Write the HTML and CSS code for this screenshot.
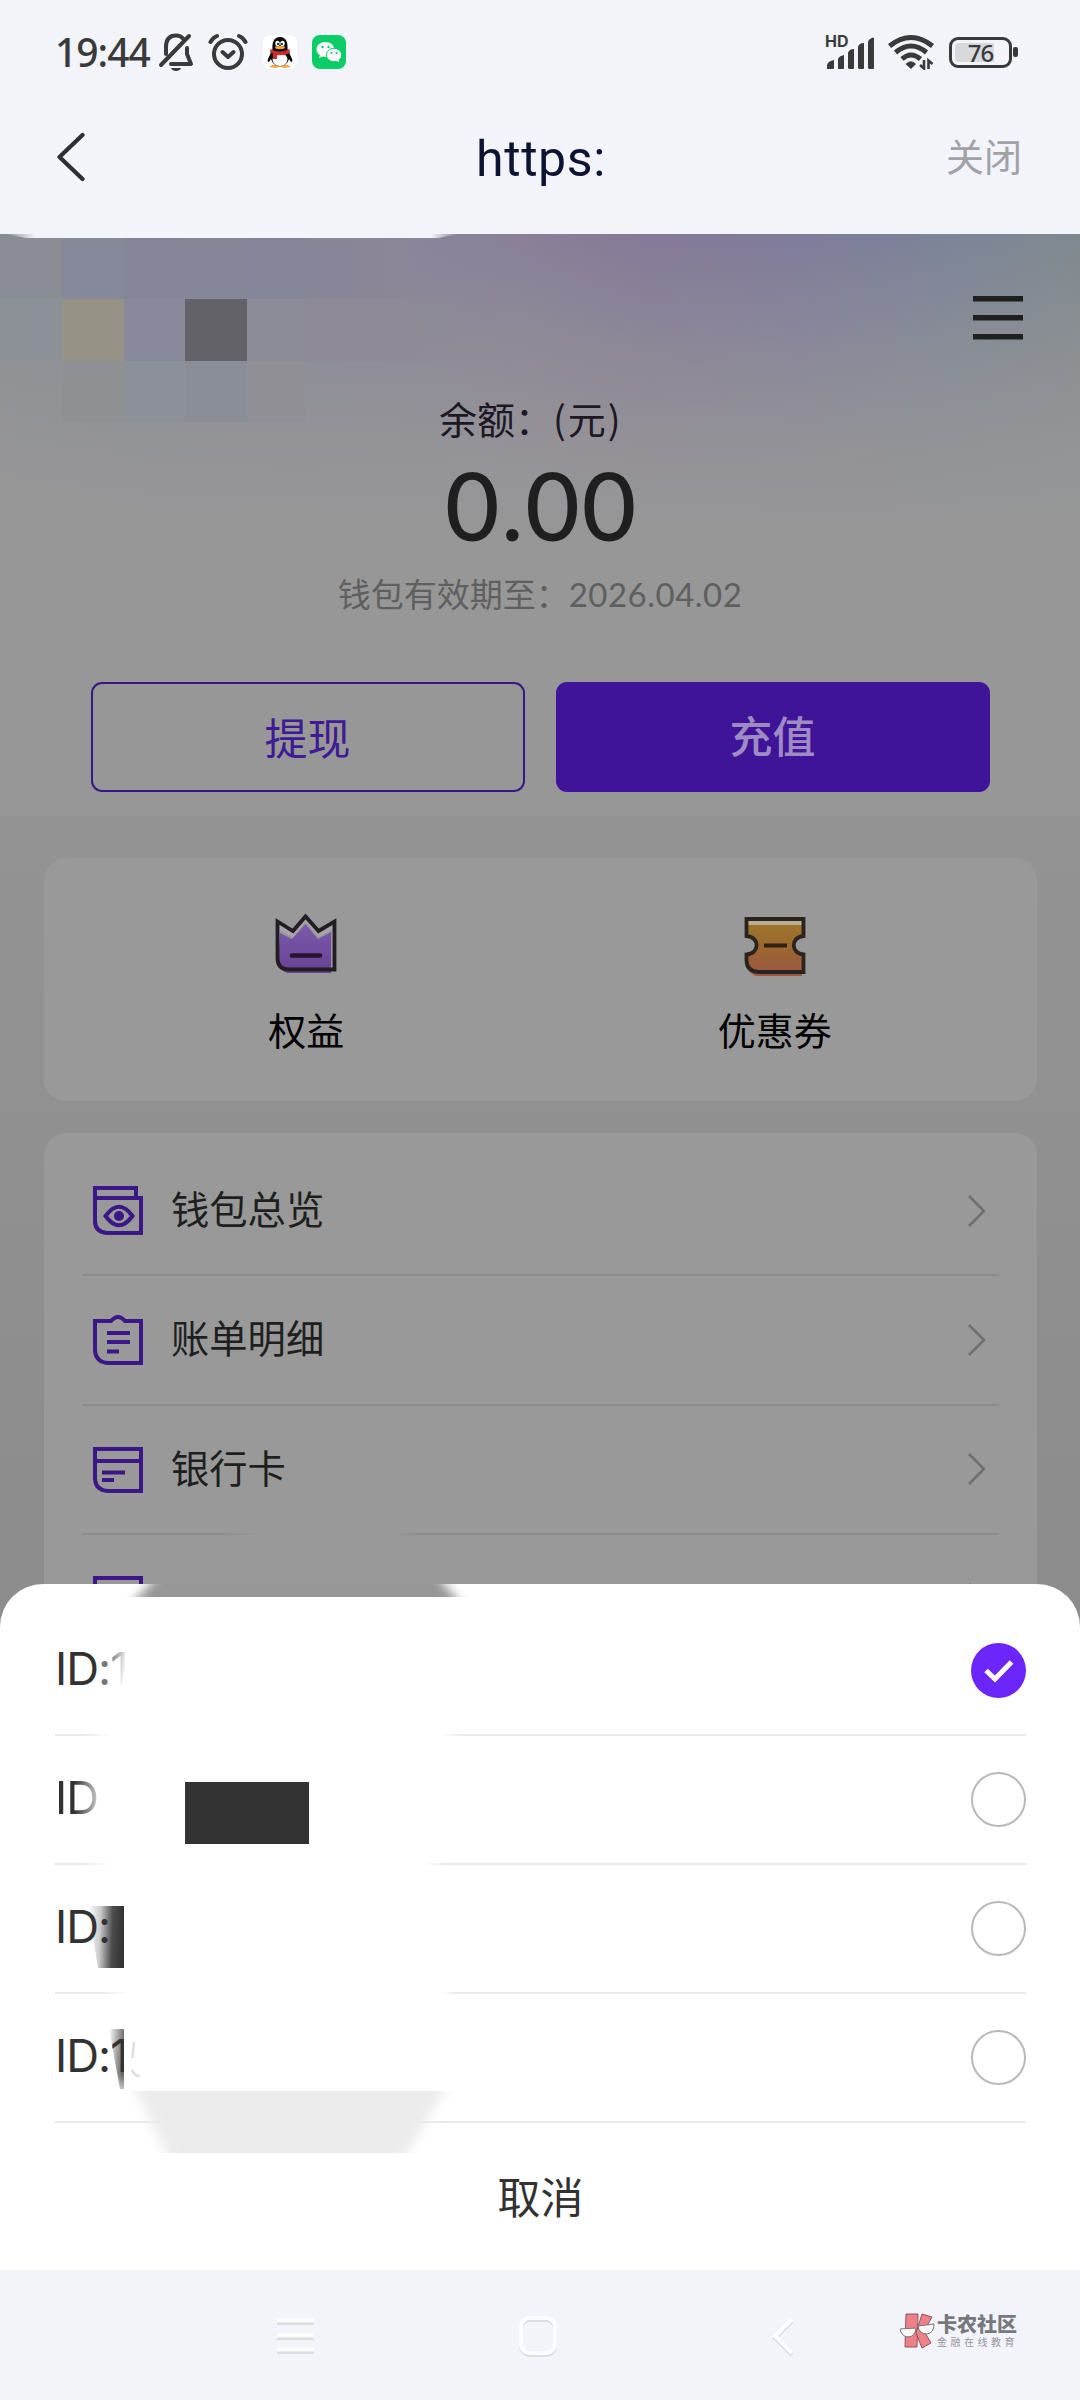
FILE: index.html
```html
<!DOCTYPE html>
<html lang="zh-CN">
<head>
<meta charset="utf-8">
<title>钱包</title>
<link rel="stylesheet" href="styles.css">
</head>
<body>
<div class="status">
  <span class="clock">19:44</span>
  <svg class="st-bell" viewBox="0 0 36 40" width="36" height="40" fill="none" stroke="#3a3a3c" stroke-width="4" stroke-linecap="round" stroke-linejoin="round">
    <path d="M8 22V15C8 7 12 3.500 18 3.500C21 3.500 23.500 4.500 25 6.500M29 16V22L33 32H13M3 33L31 4"/><path d="M13 36H23C22 40 14 40 13 36Z" fill="#3a3a3c" stroke="none"/>
  </svg>
  <svg class="st-alarm" viewBox="0 0 40 38" width="40" height="38" fill="none" stroke="#3a3a3c" stroke-width="4" stroke-linecap="round" stroke-linejoin="round">
    <circle cx="20" cy="21" r="14"/><path d="M14.500 19L20 24L25.500 19M2.500 9Q5 4.500 9 3M37.500 9Q35 4.500 31 3"/>
  </svg>
  <svg class="st-qq" viewBox="0 0 34 34" width="34" height="34">
    <rect width="34" height="34" rx="8" fill="#fff"/>
    <path d="M6 32Q11 28 17 31Q23 28 28 32Q22 33.500 17 32Q12 33.500 6 32Z" fill="#f0a43c"/>
    <path d="M17 2C11 2 9 7 9.500 14L5 24Q4 27 6 27L8 24Q10 31 17 31Q24 31 26 24L28 27Q30 27 29 24L24.500 14C25 7 23 2 17 2Z" fill="#080808"/>
    <ellipse cx="17" cy="24.500" rx="7.500" ry="6.500" fill="#fff"/>
    <ellipse cx="14.500" cy="8.500" rx="2.200" ry="2.800" fill="#fff"/><ellipse cx="19.500" cy="8.500" rx="2.200" ry="2.800" fill="#fff"/>
    <circle cx="15" cy="9" r="1"/><circle cx="19" cy="9" r="1"/>
    <ellipse cx="17" cy="12.500" rx="5" ry="1.700" fill="#f0a43c"/>
    <path d="M7.500 14Q17 19 26.500 14L27 18Q21 21 14 20V24H10V18.500L7 17.500Z" fill="#cf2b2b"/>
  </svg>
  <svg class="st-wx" viewBox="0 0 34 34" width="34" height="34">
    <rect width="34" height="34" rx="8" fill="#0acd67"/>
    <path d="M13.500 7C8 7 4.500 10.500 4.500 14.500C4.500 17 6 19 8 20.300L7 23L10.500 21.500Q13 22.300 15 21.500Q22 21 22.500 14.500C22 10 18.500 7 13.500 7Z" fill="#fff"/>
    <ellipse cx="22" cy="20" rx="7.600" ry="6.800" fill="#fff" stroke="#0acd67"/>
    <path d="M24 25L27 27.500L26.500 23Z" fill="#fff"/>
    <g fill="#0acd67"><circle cx="10.500" cy="12" r="1.200"/><circle cx="16.500" cy="12" r="1.200"/><circle cx="19.500" cy="18" r="1"/><circle cx="24.500" cy="18" r="1"/></g>
  </svg>
  <div class="signal">
    <span class="hd">HD</span>
    <svg viewBox="0 0 48 32" width="48" height="32" fill="#3a3a3c"><path d="M0 32V28Q1 24 7 23V31Q7 32 6 32ZM11 32V22Q12 19 17 18V31Q17 32 16 32ZM21 31V16Q22 12 27 12V31Q27 32 26 32H22ZM31 31V10Q32 6 37 6V31Q37 32 36 32H32ZM41 31V5Q42 1 47 0.500V31Q47 32 46 32H42Z"/></svg>
  </div>
  <svg class="st-wifi" viewBox="0 0 48 36" width="48" height="36" fill="none" stroke="#3a3a3c">
    <path d="M2.500 12Q24 -5 45.500 12" stroke-width="5"/><path d="M8.500 18.500Q24 5.500 39.500 18.500" stroke-width="5"/><path d="M15 25Q24 17 33.500 25" stroke-width="5"/>
    <path d="M18.500 30Q24 24.500 29 30L24 35Z" fill="#3a3a3c" stroke="none"/>
    <path d="M37 26V34.500L33 31M41.500 35V26.500L45.500 30" stroke-width="2.600"/>
  </svg>
  <div class="battery"><span class="cell"><span class="level">76</span></span><span class="nub"></span></div>
</div>

<header class="bar">
  <svg viewBox="0 0 28 50" width="28" height="50" fill="none" stroke="#2e2f33" stroke-width="4.200" stroke-linecap="round" stroke-linejoin="round"><path d="M25.500 3L2.500 25L25.500 47"/></svg>
  <h1>https:</h1>
  <span class="close">关闭</span>
</header>

<main class="page">
  <section class="hero">
    <svg class="mosaic" viewBox="0 0 460 190" width="460" height="190">
      <defs>
        <linearGradient id="edge" x1="0" x2="1"><stop offset="0" stop-color="#f2f4f9" stop-opacity="0"/><stop offset=".07" stop-color="#f2f4f9"/><stop offset=".94" stop-color="#f2f4f9"/><stop offset="1" stop-color="#f2f4f9" stop-opacity="0"/></linearGradient>
        <linearGradient id="m1" x1="0" x2="1"><stop offset="0" stop-color="#878598"/><stop offset=".6" stop-color="#8b8698"/><stop offset="1" stop-color="#8b8698" stop-opacity="0"/></linearGradient>
        <linearGradient id="m2" x1="0" x2="1"><stop offset="0" stop-color="#8d8a95"/><stop offset=".6" stop-color="#8e8b96"/><stop offset="1" stop-color="#8e8b96" stop-opacity="0"/></linearGradient>
      </defs>
      <g shape-rendering="crispEdges">
        <path d="M0 4H62V65H0Z" fill="#8a8d96"/><path d="M62 4H124V65H62Z" fill="#858999"/><path d="M124 4H185V65H124Z" fill="#858598"/><path d="M185 4H247V65H185Z" fill="#858698"/><path d="M247 4H305V65H247Z" fill="#848598"/><path d="M305 4H460V65H305Z" fill="url(#m1)"/>
        <path d="M0 65H62V127H0Z" fill="#8b9196"/><path d="M62 65H124V127H62Z" fill="#969286"/><path d="M124 65H185V127H124Z" fill="#88899a"/><path d="M185 65H247V127H185Z" fill="#626268"/><path d="M247 65H305V127H247Z" fill="#8a8b97"/><path d="M305 65H460V127H305Z" fill="url(#m2)"/>
        <path d="M62 127H124V188H62Z" fill="#8f9093"/><path d="M124 127H185V188H124Z" fill="#8c9098"/><path d="M185 127H247V188H185Z" fill="#8a8f97"/><path d="M247 127H305V188H247Z" fill="#918f96"/>
      </g>
      <path d="M4 0H458L438 4H26Z" fill="url(#edge)"/>
    </svg>
    <svg class="menu" viewBox="0 0 50 44" width="50" height="44"><path d="M0 0H50V5.500H0ZM0 19H50V24.500H0ZM0 38H50V43.500H0Z" fill="#1f201f"/></svg>
    <p class="label">余额：<span>(元)</span></p>
    <p class="amount">0.00</p>
    <p class="expire">钱包有效期至：<span>2026.04.02</span></p>
    <div class="actions"><span class="btn line">提现</span><span class="btn solid">充值</span></div>
  </section>

  <section class="card perks">
    <div class="perk">
      <svg viewBox="0 0 62 64" width="62" height="64">
        <defs><linearGradient id="pu" x2="0" y2="1"><stop offset="0" stop-color="#7a5bab"/><stop offset="1" stop-color="#694295"/></linearGradient></defs>
        <path d="M5 21L17 27L30.500 12L43 27L56 20V61H13Q5 60 3 50Z" fill="url(#pu)"/>
        <path d="M4 12L18 18L30.500 6L44 18L57 12V18L44 25L30.500 10L17.500 25L4 18Z" fill="#a9a5ad"/>
        <path d="M2.500 9.500L18 19L30.500 4.500L43.500 19L59.500 9.500V57.500H13Q2.500 57 2.500 46Z" fill="none" stroke="#231e24" stroke-width="3.800"/>
        <path d="M17 43.500H45" stroke="#26152e" stroke-width="4.600" stroke-linecap="round"/>
      </svg>
      <span>权益</span>
    </div>
    <div class="perk">
      <svg viewBox="0 0 62 64" width="62" height="64">
        <defs><linearGradient id="or" x2="0" y2="1"><stop offset="0" stop-color="#9c762b"/><stop offset=".5" stop-color="#9c6731"/><stop offset="1" stop-color="#9b5544"/></linearGradient></defs>
        <path d="M4 9H58V24C47 24 47 43 58 43V64H13Q7 63 4 57V42C14 42 15 24 4 24Z" fill="url(#or)"/>
        <path d="M4 9H58V13H4Z" fill="#b8ae92"/>
        <path d="M2.500 7H59.500V24C46.500 25 46.500 41.500 59.500 42.500V60H14Q2.500 59 2.500 48V42.500C16 41.500 16 25 2.500 24Z" fill="none" stroke="#2a241f" stroke-width="3.800"/>
        <path d="M20 33.500H43" stroke="#302114" stroke-width="4"/>
      </svg>
      <span>优惠券</span>
    </div>
  </section>

  <section class="card list">
    <div class="row">
      <svg class="ico" viewBox="0 0 50 50" width="50" height="50"><path d="M2 12V2H43V12M2 12H48V47H14Q2 46 2 35Z"/><path d="M12.500 30Q26 11.500 39.500 30Q26 48.500 12.500 30Z"/><circle cx="26" cy="30" r="5" class="dot"/></svg>
      <span class="name">钱包总览</span>
      <svg class="go" viewBox="0 0 18 32" width="18" height="32"><path d="M1 1L16 16L1 31"/></svg>
    </div>
    <div class="row">
      <svg class="ico" viewBox="0 0 50 50" width="50" height="50"><path d="M2 6H18Q25 -2 32 6H48V48H15Q2 47 2 34ZM14 18H37M14 27H37M14 36.500H26"/></svg>
      <span class="name">账单明细</span>
      <svg class="go" viewBox="0 0 18 32" width="18" height="32"><path d="M1 1L16 16L1 31"/></svg>
    </div>
    <div class="row cut">
      <svg class="ico" viewBox="0 0 50 50" width="50" height="50"><path d="M2 5H48V47H15Q2 46 2 34ZM2 17H48M9 28.500H32M9 36H21"/></svg>
      <span class="name">银行卡</span>
      <svg class="go" viewBox="0 0 18 32" width="18" height="32"><path d="M1 1L16 16L1 31"/></svg>
    </div>
    <div class="row">
      <svg class="ico" viewBox="0 0 50 50" width="50" height="50"><path d="M2 4H48V48H15Q2 47 2 34Z"/></svg>
      <span class="name"></span>
      <svg class="go" viewBox="0 0 18 32" width="18" height="32"><path d="M1 1L16 16L1 31"/></svg>
    </div>
  </section>

  <section class="sheet">
    <div class="option"><span class="id">ID<span class="dim">:</span><span class="fade">1</span></span>
      <svg viewBox="0 0 55 55" width="55" height="55"><circle cx="27.500" cy="27.500" r="27.500" fill="#6c25fb"/><path d="M15 27.500L24 36L40.500 19" fill="none" stroke="#fff" stroke-width="5"/></svg></div>
    <div class="option"><span class="id second">ID</span><span class="radio"></span></div>
    <div class="option"><span class="id">ID:</span><span class="radio"></span></div>
    <div class="option"><span class="id">ID:1</span><span class="radio"></span></div>
    <div class="cancel">取消</div>
    <svg class="smudge" viewBox="0 0 500 590" width="500" height="590">
      <defs>
        <linearGradient id="w" x1="0" x2="1"><stop offset="0" stop-color="#fff" stop-opacity="0"/><stop offset=".08" stop-color="#fff"/><stop offset=".94" stop-color="#fff"/><stop offset="1" stop-color="#fff" stop-opacity="0"/></linearGradient>
        <linearGradient id="d3" x1="0" x2="1" y2=".06"><stop offset="0" stop-color="#333" stop-opacity="0"/><stop offset=".35" stop-color="#333" stop-opacity=".25"/><stop offset=".7" stop-color="#333" stop-opacity=".88"/><stop offset="1" stop-color="#333"/></linearGradient>
        <linearGradient id="d4" x1="0" x2="1" y1="0" y2=".3"><stop offset="0" stop-color="#333" stop-opacity="0"/><stop offset="1" stop-color="#333" stop-opacity=".75"/></linearGradient>
        <linearGradient id="d4v" x2="0" y2="1"><stop offset="0" stop-color="#fff" stop-opacity="0"/><stop offset="1" stop-color="#fff" stop-opacity=".75"/></linearGradient>
        <filter id="soft" x="-10%" y="-30%" width="120%" height="160%"><feGaussianBlur stdDeviation="7 0"/></filter>
      </defs>
      <path d="M150 0H444L455 13H138Z" fill="#969696" filter="url(#soft)"/>
      <path d="M82 148H464V154H82Z" fill="url(#w)"/>
      <path d="M82 277H446V283H82Z" fill="url(#w)"/>
      <path d="M100 406H460V412H100Z" fill="url(#w)"/>
      <path d="M185 198H309V260H185Z" fill="#323232"/>
      <path d="M88 322H124V384H98Z" fill="url(#d3)"/>
      <path d="M109 445H124V505H120Z" fill="url(#d4)"/>
      <path d="M109 490H124V508H109Z" fill="url(#d4v)"/>
      <path d="M124 445H130V508H124Z" fill="#fff"/>
      <path d="M134 458L132.500 474M132 486Q134 492 140 492" fill="none" stroke="#d0d0d0" stroke-width="2.500" opacity=".7"/>
      <path d="M136 507H444L407 569H166Z" fill="#ebebeb" filter="url(#soft)"/>
    </svg>
  </section>
</main>

<footer class="nav">
  <svg class="keys" viewBox="0 0 540 50" width="540" height="50" fill="none">
    <g stroke="#dcdde1" stroke-width="4"><path d="M8 14H45M8 29H45M8 43H45"/><rect x="252" y="11" width="34" height="35" rx="9"/><path d="M523 12L506 29L523 46"/></g>
    <g stroke="#fcfcfe" stroke-width="4"><path d="M8 11.500H45M8 26.500H45M8 40.500H45"/><rect x="252" y="9" width="34" height="35" rx="9"/><path d="M523 10L506 27L523 44"/></g>
  </svg>
  <div class="brand">
    <svg viewBox="0 0 36 36" width="36" height="36" stroke="#8a5560" stroke-width="1">
      <path d="M6 1H18L17 34H5Z" fill="#f08088"/><path d="M22 1L32 4L24 18L31 30L22 35L16 20Z" fill="#f08088"/>
      <path d="M0 16L16 15Q15 24 8 24Q1 23 0 16ZM18 13L34 11Q34 20 27 21Q19 21 18 13Z" fill="#f8f8fb" stroke="#77757c"/>
    </svg>
    <div class="words"><b>卡农社区</b><small>金融在线教育</small></div>
  </div>
</footer>
</body>
</html>
```
FILE: styles.css
```css
* { box-sizing: border-box; }
body {
  margin: 0;
  width: 1080px;
  height: 2400px;
  display: flex;
  flex-direction: column;
  overflow: hidden;
  background: #f2f4f9;
  font-family: Lato, "Noto Sans CJK SC", sans-serif;
}
h1, p { margin: 0; font-weight: 400; }
svg { display: block; flex: none; }

/* Status bar */
.status { height: 104px; display: flex; align-items: center; padding: 0 62px 0 55px; color: #3a3a3c; }
.clock { width: 103px; font: 500 39px/50px "Noto Sans", sans-serif; letter-spacing: -1px; white-space: nowrap; }
.st-alarm { margin-left: 14px; }
.st-qq { margin-left: 15px; }
.st-wx { margin-left: 15px; }
.signal { margin-left: auto; width: 52px; height: 34px; display: flex; position: relative; align-items: flex-end; padding-left: 2px; }
.hd { position: absolute; left: 0; top: -1px; font: 700 16px/14px Inter, sans-serif; }
.st-wifi { margin-left: 10px; }
.battery { display: flex; align-items: center; margin-left: 14px; gap: 1px; }
.cell { width: 63px; height: 31px; border: 3px solid #3a3a3c; border-radius: 9px; padding: 3px; display: flex; }
.level { flex: 1; border-radius: 4px; background: linear-gradient(90deg, #d8d9dc 76%, transparent 76%); font: 500 24px/19px "Noto Sans", sans-serif; letter-spacing: -1px; text-align: center; }
.nub { width: 5px; height: 10px; border-radius: 2px; background: #3a3a3c; }

/* Title bar */
.bar { height: 130px; display: grid; grid-template-columns: 1fr auto 1fr; align-items: center; padding: 0 58px 24px 57px; }
.bar h1 { padding: 4px 0 0 3px; font: 400 50px/60px Roboto, sans-serif; color: #0d1433; letter-spacing: .6px; }
.close { justify-self: end; margin-top: -2px; font-size: 38px; line-height: 50px; color: #a0a2a6; }

/* Dimmed wallet page */
.page { position: relative; height: 2036px; overflow: hidden; background: linear-gradient(#979797 0, #969696 582px, #939393 582px, #8c8c8c 1400px); }
.hero {
  position: relative;
  height: 624px;
  padding-top: 159px;
  display: flex;
  flex-direction: column;
  align-items: center;
  background:
    linear-gradient(rgba(151,151,151,0) 0, rgba(151,151,151,.48) 116px, rgba(151,151,151,.82) 215px, #979797 310px, #979797 582px, #939393 582px),
    linear-gradient(90deg, #8a8c94 0, #84879a 15%, #86849a 35%, #898098 48%, #857998 60%, #7f7b9c 74%, #7c8498 88%, #80898f 100%);
}
.mosaic { position: absolute; left: 0; top: 0; }
.menu { position: absolute; right: 57px; top: 62px; }
.label { width: 202px; font-size: 38px; line-height: 50px; color: #1c1824; white-space: nowrap; }
.label span { font-family: "Noto Sans CJK SC", sans-serif; letter-spacing: 2px; }
.amount { margin-top: 14px; padding-left: 3px; font-weight: 500; font-size: 94px; line-height: 94px; letter-spacing: 1.8px; color: #1f1f1f; }
.expire { margin-top: 18px; font-size: 33px; line-height: 48px; color: #5f5f5f; white-space: nowrap; }
.expire span { letter-spacing: .5px; }
.actions { margin-top: 64px; display: flex; gap: 31px; }
.btn { width: 434px; height: 110px; border-radius: 11px; font-size: 43px; text-align: center; }
.btn.line { border: 2px solid #3a1784; color: #3f1a94; line-height: 109px; }
.btn.solid { background: #401499; color: #9e8bc4; font-weight: 500; line-height: 109px; }

.card { margin: 0 43px 0 44px; border-radius: 22px; background: #999; }
.perks { height: 243px; padding: 54px 28px 0; display: flex; }
.perk { width: 469px; display: flex; flex-direction: column; align-items: center; gap: 29px; font-size: 38px; line-height: 50px; color: #000; }
.list { margin-top: 32px; padding: 14px 38px 0 38px; }
.row { height: 129.300px; display: flex; align-items: center; padding: 0 13px 0 11px; border-bottom: 2px solid #8d8d8d; }
.row.cut { border-image: linear-gradient(90deg, #8d8d8d 15%, #999 20%, #999 34%, #8d8d8d 37%) 1; border-style: none none solid; }
.ico { fill: none; stroke: #3b1788; stroke-width: 4; }
.ico .dot { fill: #3b1788; stroke: none; }
.name { flex: 1; margin: -3px 0 0 28px; font-size: 38.300px; line-height: 50px; color: #1f1f1f; }
.go { fill: none; stroke: #707070; stroke-width: 2.600; }

/* Account picker sheet */
.sheet { position: absolute; left: 0; right: 0; bottom: 0; height: 686px; padding: 23px 54px 0 55px; border-radius: 43px 43px 0 0; background: #fff; }
.option { height: 129px; display: flex; align-items: center; justify-content: space-between; padding-bottom: 1px; border-bottom: 2px solid #e9e9e9; }
.id { margin-top: -2px; font: 400 45.500px/60px Inter, sans-serif; letter-spacing: -1px; color: #323232; }
.dim { color: #777; }
.fade { background: linear-gradient(100deg, #888 20%, #fff 75%); -webkit-background-clip: text; background-clip: text; color: transparent; }
.second { background: linear-gradient(90deg, #323232 45%, #ccc 100%); -webkit-background-clip: text; background-clip: text; color: transparent; }
.radio { width: 55px; height: 55px; border: 2px solid #b9b9b9; border-radius: 50%; }
.cancel { padding-top: 45px; text-align: center; font-size: 43px; line-height: 60px; color: #323232; }
.smudge { position: absolute; left: 0; top: 0; }

/* System navigation */
.nav { height: 130px; display: flex; justify-content: space-between; padding: 39px 63px 0 269px; }
.brand { display: flex; gap: 1px; padding-top: 4px; }
.words { width: 80px; display: flex; flex-direction: column; white-space: nowrap; color: #77777e; font-family: "Noto Sans CJK SC", sans-serif; }
.words b { font-size: 20px; line-height: 22px; font-weight: 900; }
.words small { font-size: 10px; line-height: 14px; letter-spacing: 3.500px; color: #97979d; }
```
